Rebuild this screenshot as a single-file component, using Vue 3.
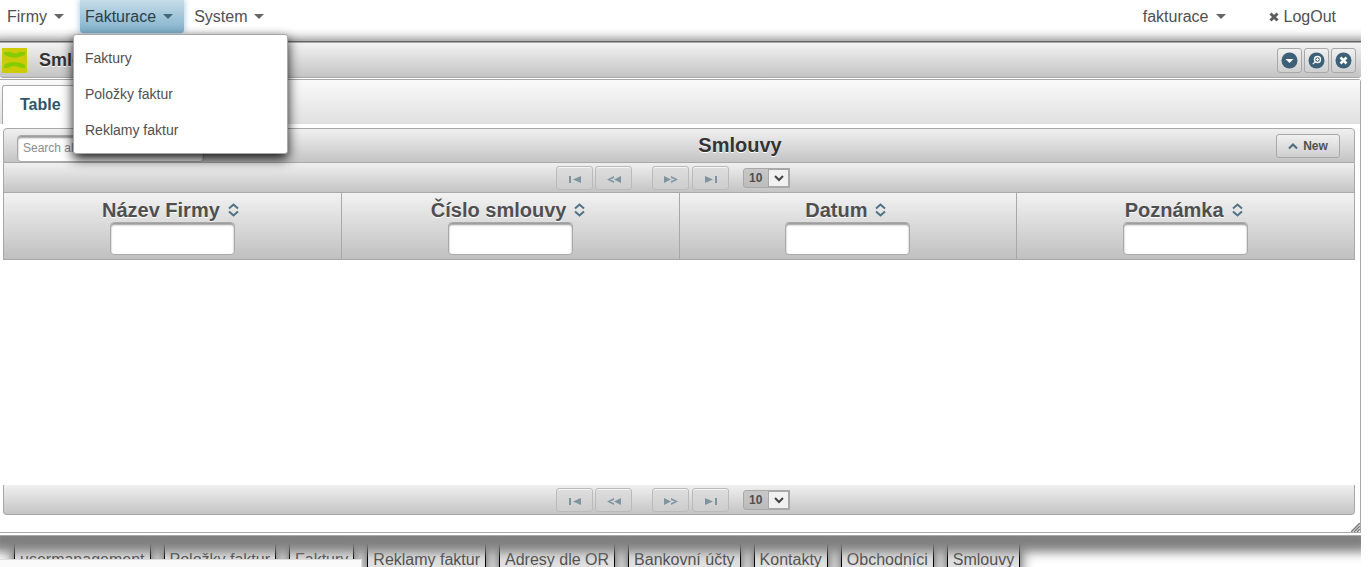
<template>
  <div class="desktop">
    <nav class="menubar">
      <a
        v-for="item in menu"
        :key="item"
        href="#"
        class="menu-item"
        :class="{ active: item === activeMenu }"
      >
        {{ item }}<span class="caret"></span>
      </a>
      <a href="#" class="menu-item user">fakturace<span class="caret"></span></a>
      <a href="#" class="menu-item">
        <svg class="cross" width="10" height="10" viewBox="0 0 10 10">
          <path d="M1.500 1.500l7 7M8.500 1.500l-7 7" stroke="#5e5e5e" stroke-width="3" />
        </svg>LogOut
      </a>
      <div class="submenu">
        <a v-for="item in submenu" :key="item" href="#">{{ item }}</a>
      </div>
    </nav>

    <section class="dialog">
      <header class="titlebar">
        <svg width="25" height="25" viewBox="0 0 25 25">
          <rect width="25" height="25" fill="#cdcb08" />
          <path d="M2 4h7q4 3 8 0h6v3l-6 2q-5 1-9 0l-6-2z" fill="#86cc05" />
          <path d="M2 20v-3q4-3 10-3t11 3v3h-4q-7-4-13 0z" fill="#86cc05" />
        </svg>
        <h1>Smlouvy</h1>
        <button type="button" class="icon-btn" aria-label="Minimize">
          <svg width="17" height="17" viewBox="0 0 17 17">
            <circle cx="8.5" cy="8.5" r="8" fill="#3b6077" />
            <path d="M4.5 7h8l-4 4z" fill="#fff" />
          </svg>
        </button>
        <button type="button" class="icon-btn" aria-label="Maximize">
          <svg width="17" height="17" viewBox="0 0 17 17">
            <circle cx="8.5" cy="8.5" r="8" fill="#3b6077" />
            <circle cx="9.5" cy="7.5" r="3" fill="none" stroke="#fff" stroke-width="1.4" />
            <path d="M7.4 9.6l-2.6 2.6M8 7.5h3M9.5 6v3" stroke="#fff" stroke-width="1.2" />
          </svg>
        </button>
        <button type="button" class="icon-btn" aria-label="Close">
          <svg width="17" height="17" viewBox="0 0 17 17">
            <circle cx="8.5" cy="8.5" r="8" fill="#3b6077" />
            <path d="M5.5 5.5l6 6M11.5 5.5l-6 6" stroke="#fff" stroke-width="2.6" />
          </svg>
        </button>
      </header>

      <div class="content">
        <div class="tabs"><a href="#" class="tab">Table</a></div>
        <div class="datatable">
          <div class="table-header">
            <input type="text" class="field search" placeholder="Search all fields" aria-label="Search all fields" />
            <h2>Smlouvy</h2>
            <button type="button" class="new-btn">
              <svg width="10" height="8" viewBox="0 0 10 8">
                <path d="M1 6.5l4-4 4 4" fill="none" stroke="#4b6b7d" stroke-width="2" />
              </svg>New
            </button>
          </div>
          <div class="paginator">
            <button v-for="p in pager" :key="p.label" type="button" disabled :aria-label="p.label" :class="p.cls">
              <svg width="14" height="8" viewBox="0 0 14 8"><path :d="p.d" fill="#7f949f" /></svg>
            </button>
            <span class="rows">
              <select v-model="rows" aria-label="Rows per page">
                <option v-for="n in sizes" :key="n">{{ n }}</option>
              </select>
              <svg width="10" height="7" viewBox="0 0 10 7"><path d="M1 1l4 4 4-4" fill="none" stroke="#444" stroke-width="2" /></svg>
            </span>
          </div>
          <table>
            <thead>
              <tr>
                <th v-for="col in columns" :key="col">
                  <div class="col-title">
                    {{ col }}
                    <svg width="11" height="14" viewBox="0 0 11 14">
                      <path d="M1 5.500l4.500-4 4.500 4M1 8.500l4.500 4 4.500-4" fill="none" stroke="#4f7285" stroke-width="2" />
                    </svg>
                  </div>
                  <input type="text" class="field" :aria-label="col" />
                </th>
              </tr>
            </thead>
          </table>
          <div class="empty"></div>
          <div class="paginator bottom">
            <button v-for="p in pager" :key="p.label" type="button" disabled :aria-label="p.label" :class="p.cls">
              <svg width="14" height="8" viewBox="0 0 14 8"><path :d="p.d" fill="#7f949f" /></svg>
            </button>
            <span class="rows">
              <select v-model="rows" aria-label="Rows per page">
                <option v-for="n in sizes" :key="n">{{ n }}</option>
              </select>
              <svg width="10" height="7" viewBox="0 0 10 7"><path d="M1 1l4 4 4-4" fill="none" stroke="#444" stroke-width="2" /></svg>
            </span>
          </div>
        </div>
        <svg class="grip" width="9" height="9" viewBox="0 0 9 9">
          <path d="M0 9l9-9M3 9l6-6M6 9l3-3" stroke="#777" stroke-width="1.500" />
        </svg>
      </div>
    </section>

    <footer class="taskbar">
      <button v-for="w in windows" :key="w" type="button">{{ w }}</button>
    </footer>
    <div class="statusbar"></div>
  </div>
</template>

<script setup>
import { ref } from 'vue'

const menu = ['Firmy', 'Fakturace', 'System']
const activeMenu = ref('Fakturace')
const submenu = ['Faktury', 'Položky faktur', 'Reklamy faktur']

const columns = ['Název Firmy', 'Číslo smlouvy', 'Datum', 'Poznámka']
const sizes = [10, 20, 50]
const rows = ref(10)

const pager = [
  { label: 'First', cls: 'first', d: 'M1 1h2v7h-2zM13 1v7l-8-3.500z' },
  { label: 'Previous', cls: 'prev', d: 'M7 1v2l-4 1.500 4 1.500v2l-7-3.500zM14 1v7l-7-3.500z' },
  { label: 'Next', cls: 'next', d: 'M0 1l7 3.500-7 3.500zM7 1l7 3.500-7 3.500v-2l4-1.500-4-1.500z' },
  { label: 'Last', cls: 'last', d: 'M1 1l8 3.500-8 3.500zM11 1h2v7h-2z' },
]

const windows = [
  'usermanagement',
  'Položky faktur',
  'Faktury',
  'Reklamy faktur',
  'Adresy dle OR',
  'Bankovní účty',
  'Kontakty',
  'Obchodníci',
  'Smlouvy',
]
</script>

<style>
body {
  margin: 0;
  background: #fff;
}
</style>

<style scoped>
*,
*::after {
  box-sizing: border-box;
}

.desktop {
  display: flex;
  flex-direction: column;
  height: 100vh;
  margin-right: 7px;
  overflow: hidden;
  font-family: "Liberation Sans", Arial, sans-serif;
  font-size: 16px;
  color: #4f4f4f;
}

button,
input,
select {
  font-family: inherit;
  color: inherit;
}

a {
  color: inherit;
  text-decoration: none;
}

/* top menu */
.menubar {
  position: relative;
  z-index: 2;
  display: flex;
  gap: 5px;
  height: 41px;
  padding: 0 14px 0 2px;
  flex-shrink: 0;
}

.menu-item {
  display: flex;
  align-items: center;
  height: 33px;
  padding: 0 11px 0 5px;
}

.menu-item.active {
  background: linear-gradient(#c6dce9, #7fb0ca);
  box-shadow: 0 0 6px #9cc3d8;
  border-radius: 0 0 3px 3px;
  color: #2b3f4b;
}

.menu-item.user {
  margin-left: auto;
  margin-right: 22px;
}

.caret {
  margin-left: 7px;
  border: 5px solid transparent;
  border-top-color: #666;
  border-bottom: 0;
}

.active .caret {
  border-top-color: #40687e;
}

.cross {
  margin-right: 5px;
}

.submenu {
  position: absolute;
  top: 34px;
  left: 73px;
  width: 215px;
  padding: 5px 0;
  background: #fff;
  border: 1px solid #a8a8a8;
  border-radius: 3px;
  box-shadow: 0 5px 12px rgba(0, 0, 0, 0.9);
  font-size: 14px;
}

.submenu a {
  display: block;
  padding: 0 11px;
  line-height: 36px;
}

/* window */
.dialog {
  position: relative;
  z-index: 1;
  display: flex;
  flex-direction: column;
  flex: 1;
  min-height: 0;
  padding-bottom: 2px;
  background: #fff;
  border-top: 1px solid #666;
  border-bottom: 1px solid #a8a8a8;
  box-shadow: 0 7px 10px 9px #808080;
}

.titlebar {
  display: flex;
  align-items: center;
  gap: 2px;
  height: 36px;
  margin-bottom: 1px;
  padding: 0 5px 0 2px;
  background: linear-gradient(#f2f2f2, #c4c4c4);
  border-top: 1px solid #a8a8a8;
  border-bottom: 1px solid #a8a8a8;
  border-radius: 0 0 3px 3px;
  flex-shrink: 0;
}

.titlebar h1 {
  flex: 1;
  margin: 0 0 0 10px;
  font-size: 18px;
  color: #333;
  text-shadow: 0 1px 0 #fff;
}

.icon-btn {
  display: flex;
  align-items: center;
  justify-content: center;
  width: 25px;
  height: 25px;
  padding: 0;
  background: linear-gradient(#f0f0f0, #cfcfcf);
  border: 1px solid #a8a8a8;
  border-radius: 3px;
}

.content {
  position: relative;
  display: flex;
  flex-direction: column;
  flex: 1;
  min-height: 0;
  border: 1px solid #a8a8a8;
  border-left: 0;
  border-radius: 0 3px 0 0;
}

.tabs {
  display: flex;
  align-items: flex-end;
  height: 44px;
  padding-left: 2px;
  background: linear-gradient(#fafafa, #e0e0e0);
  flex-shrink: 0;
}

.tab {
  height: 39px;
  padding: 0 17px;
  background: #fff;
  border: 1px solid #a8a8a8;
  border-bottom: 0;
  border-radius: 3px 3px 0 0;
  font-weight: bold;
  line-height: 38px;
  color: #2f556b;
}

.datatable {
  display: flex;
  flex-direction: column;
  flex: 1;
  min-height: 0;
  margin: 4px 5px 17px 3px;
}

.table-header {
  display: flex;
  align-items: center;
  height: 35px;
  padding: 0 14px 0 13px;
  background: linear-gradient(#f0f0f0, #c4c4c4);
  border: 1px solid #a8a8a8;
  border-radius: 4px 4px 0 0;
  flex-shrink: 0;
}

.table-header h2 {
  flex: 1;
  margin: 0;
  font-size: 20px;
  color: #333;
  text-align: center;
  text-shadow: 0 1px 0 #fff;
}

.field {
  width: 125px;
  height: 33px;
  padding: 4px;
  background: #fff;
  border: 1px solid #a8a8a8;
  border-radius: 4px;
  box-shadow: inset 0 2px 2px #999;
}

.search {
  align-self: flex-end;
  width: 187px;
  height: 27px;
  padding: 0 5px 2px;
  font-size: 12px;
}

.search::placeholder {
  color: #8c8c8c;
}

.new-btn {
  display: flex;
  align-items: center;
  justify-content: center;
  gap: 5px;
  width: 64px;
  height: 24px;
  padding: 0;
  background: linear-gradient(#f0f0f0, #cfcfcf);
  border: 1px solid #a8a8a8;
  border-radius: 3px;
  font-size: 12px;
  font-weight: bold;
}

.paginator {
  display: flex;
  align-items: center;
  justify-content: center;
  height: 30px;
  padding-right: 12px;
  background: linear-gradient(#f0f0f0, #c4c4c4);
  border: 1px solid #a8a8a8;
  border-top: 0;
  flex-shrink: 0;
}

.paginator.bottom {
  border-radius: 0 0 4px 4px;
}

.paginator button {
  display: flex;
  align-items: center;
  justify-content: center;
  width: 37px;
  height: 24px;
  margin-right: 2px;
  padding: 3px 0 0;
  background: linear-gradient(#dedede, #cdcdcd);
  border: 1px solid #bababa;
  border-radius: 3px;
  box-shadow: inset 0 1px 0 #f4f4f4;
}

.paginator .prev {
  margin-right: 20px;
}

.paginator .next {
  margin-right: 3px;
}

.paginator .last {
  margin-right: 14px;
}

.rows {
  position: relative;
  display: flex;
}

.rows::after {
  content: "";
  position: absolute;
  top: 0;
  right: 0;
  width: 22px;
  height: 20px;
  background: #f1f1f1;
  border: 2px solid #a8a8a8;
  border-left-width: 1px;
  pointer-events: none;
}

.rows select {
  appearance: none;
  width: 47px;
  height: 20px;
  padding: 0 5px;
  background: linear-gradient(#c8c8c8, #bcbcbc);
  border: 1px solid #a8a8a8;
  border-radius: 3px 0 0 3px;
  font-size: 12px;
  font-weight: bold;
}

.rows svg {
  position: absolute;
  top: 7px;
  right: 6px;
  z-index: 1;
  pointer-events: none;
}

table {
  width: 100%;
  table-layout: fixed;
  border-collapse: separate;
  border-spacing: 0;
  border-left: 1px solid #a8a8a8;
}

th {
  height: 67px;
  padding: 0;
  background: linear-gradient(#f2f2f2, #c0c0c0);
  border-right: 1px solid #a8a8a8;
  border-bottom: 1px solid #a8a8a8;
}

.col-title {
  display: flex;
  align-items: center;
  justify-content: center;
  gap: 8px;
  padding-right: 4px;
  font-size: 20px;
  line-height: 24px;
  text-shadow: 0 1px 0 #fff;
}

th .field {
  display: block;
  margin: 0 auto;
}

.empty {
  flex: 1;
}

.grip {
  position: absolute;
  right: 0;
  bottom: 0;
}

/* minimized windows */
.taskbar {
  display: flex;
  gap: 13px;
  height: 31px;
  padding: 8px 0 0 14px;
  flex-shrink: 0;
}

.taskbar button {
  height: 32px;
  padding: 0 5px;
  background: #e0e0e0;
  border: 1px solid #000;
  border-top: 0;
  box-shadow: 0 0 14px #333;
  font-size: 16px;
  line-height: 30px;
  white-space: nowrap;
  flex-shrink: 0;
}

.statusbar {
  position: fixed;
  bottom: 0;
  left: 0;
  z-index: 3;
  width: 362px;
  height: 8px;
  background: #fafafa;
  border-top: 1px solid #ddd;
  border-right: 1px solid #ddd;
}
</style>
